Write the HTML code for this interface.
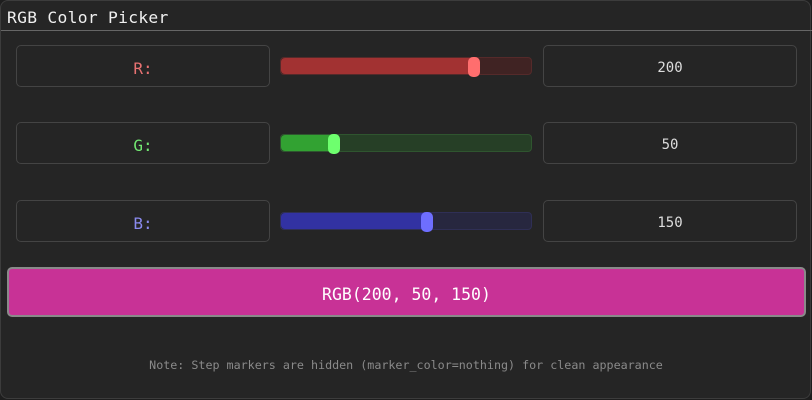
<!DOCTYPE html>
<html><head><style>
*{box-sizing:border-box;margin:0;padding:0}
body{width:812px;height:400px;background:#1e1e1e;position:relative;overflow:hidden;font-family:"DejaVu Sans Mono","Liberation Mono",monospace}
.win{position:absolute;left:0;top:0;width:811px;height:399px;background:#252525;border:1px solid #3c3c3c;border-radius:8px}
.title{position:absolute;left:6px;top:7px;color:#f0f0f0;font-size:16.3px;letter-spacing:0.3px}
.hr{position:absolute;left:0;top:29px;width:811px;height:1px;background:#666}
.box{position:absolute;border:1px solid #444;border-radius:5px;display:flex;align-items:center;justify-content:center;font-size:16px;padding-top:4px}
.val{color:#ddd;font-size:14px}
.track{position:absolute;left:280px;width:252px;height:18px;border-radius:4px}
.fill{position:absolute;left:0;top:0;height:100%;border-radius:4px 0 0 4px}
.thumb{position:absolute;top:-1px;width:12px;height:20px;border-radius:5px}
</style></head><body>
<div class="win">
<div class="title">RGB Color Picker</div>
<div class="hr"></div>
</div>
<div class="box" style="left:16px;top:45px;width:254px;height:42px;color:#e87272">R:</div>
<div class="box" style="left:16px;top:122px;width:254px;height:42px;color:#72e872">G:</div>
<div class="box" style="left:16px;top:200px;width:254px;height:42px;color:#8a8aee">B:</div>
<div class="box val" style="left:543px;top:45px;width:254px;height:42px">200</div>
<div class="box val" style="left:543px;top:122px;width:254px;height:42px">50</div>
<div class="box val" style="left:543px;top:200px;width:254px;height:42px">150</div>

<div class="track" style="top:57px;background:#402323;border:1px solid #552a2a"><div class="fill" style="width:190px;background:#a23232"></div><div class="thumb" style="left:187px;background:#ff6e6e"></div></div>
<div class="track" style="top:134px;background:#263f26;border:1px solid #2f552f"><div class="fill" style="width:50px;background:#32a232"></div><div class="thumb" style="left:47px;background:#6eff6e"></div></div>
<div class="track" style="top:212px;background:#27273f;border:1px solid #2f2f55"><div class="fill" style="width:143px;background:#3232a2"></div><div class="thumb" style="left:140px;background:#6e6eff"></div></div>

<div class="box" style="left:7px;top:267px;width:799px;height:50px;background:#c83296;border:2px solid #8a8a8a;color:#fff;font-size:16.5px">RGB(200, 50, 150)</div>
<div style="position:absolute;left:0;width:812px;top:358px;text-align:center;color:#8a8a8a;font-size:11.7px">Note: Step markers are hidden (marker_color=nothing) for clean appearance</div>
</body></html>
